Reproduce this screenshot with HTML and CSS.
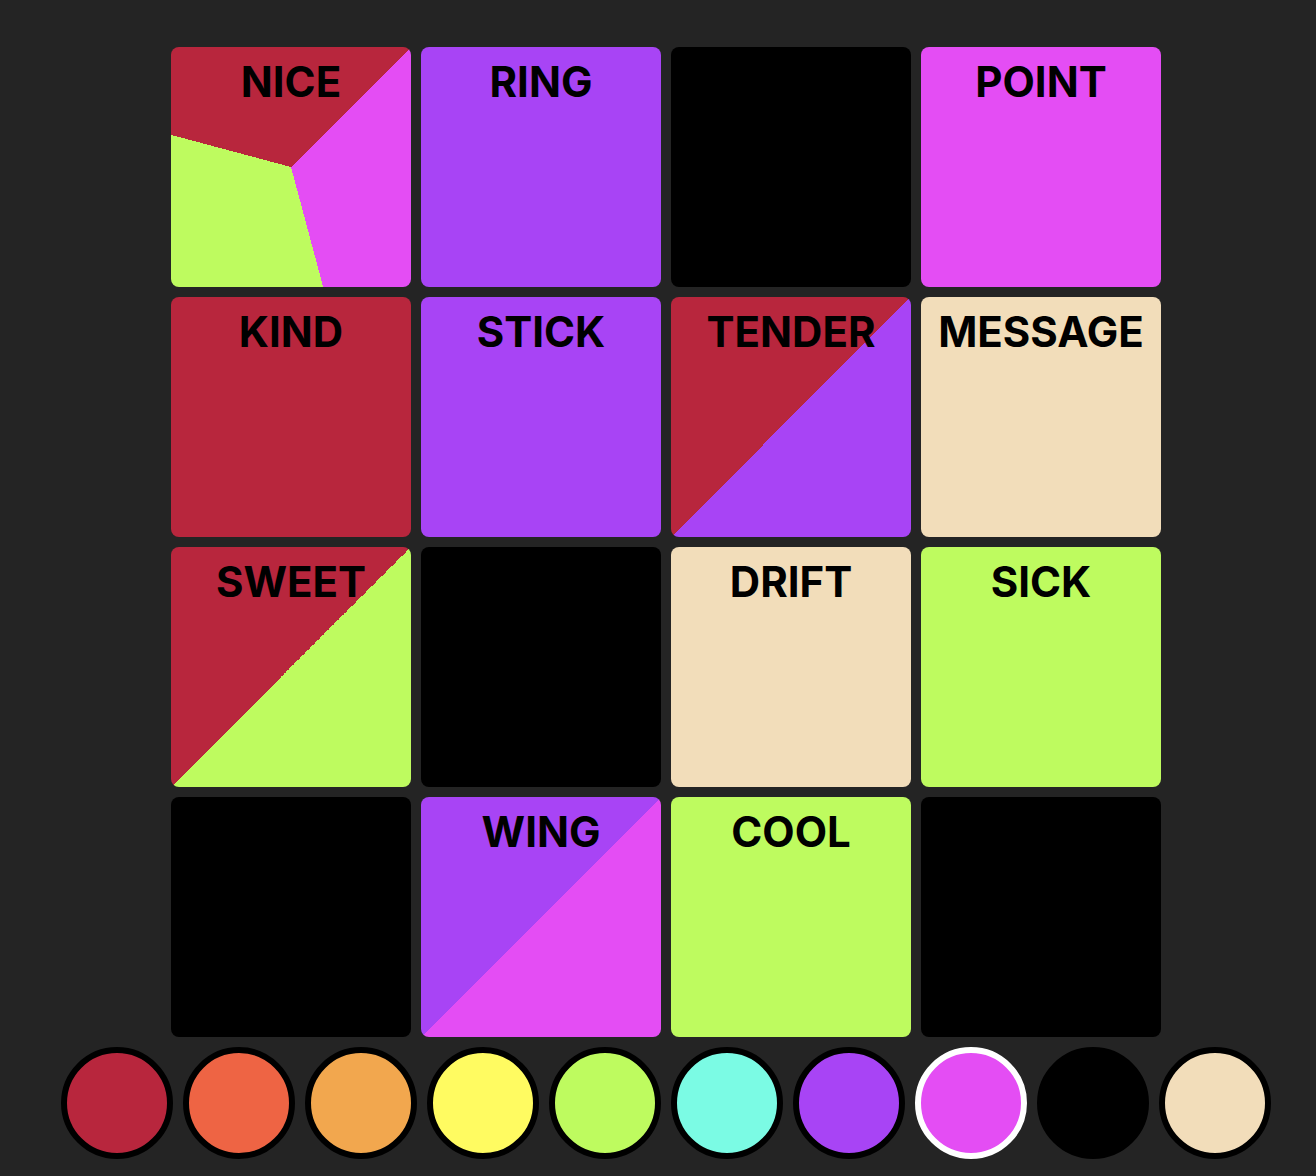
FILE: index.html
```html
<!DOCTYPE html>
<html>
<head>
<meta charset="utf-8">
<link rel="stylesheet" href="styles.css">
</head>
<body>
<main class="app">
  <div class="board">
    <div class="tile tri-nice"><span class="word">NICE</span></div>
    <div class="tile c-purple"><span class="word">RING</span></div>
    <div class="tile c-black"></div>
    <div class="tile c-pink"><span class="word">POINT</span></div>

    <div class="tile c-red"><span class="word">KIND</span></div>
    <div class="tile c-purple"><span class="word">STICK</span></div>
    <div class="tile duo-red-purple"><span class="word">TENDER</span></div>
    <div class="tile c-beige"><span class="word">MESSAGE</span></div>

    <div class="tile duo-red-lime"><span class="word">SWEET</span></div>
    <div class="tile c-black"></div>
    <div class="tile c-beige"><span class="word">DRIFT</span></div>
    <div class="tile c-lime"><span class="word">SICK</span></div>

    <div class="tile c-black"></div>
    <div class="tile duo-purple-pink"><span class="word">WING</span></div>
    <div class="tile c-lime"><span class="word">COOL</span></div>
    <div class="tile c-black"></div>
  </div>
  <div class="palette">
    <div class="swatch c-red"></div>
    <div class="swatch c-coral"></div>
    <div class="swatch c-orange"></div>
    <div class="swatch c-yellow"></div>
    <div class="swatch c-lime"></div>
    <div class="swatch c-cyan"></div>
    <div class="swatch c-purple"></div>
    <div class="swatch c-pink selected"></div>
    <div class="swatch c-black"></div>
    <div class="swatch c-beige"></div>
  </div>
</main>
</body>
</html>
```
FILE: styles.css
```css
html, body {
  margin: 0;
  padding: 0;
  background: #242424;
}
body {
  font-family: Inter, "Liberation Sans", Arial, sans-serif;
}
.app {
  display: flex;
  flex-direction: column;
  align-items: center;
  padding: 47px 0 0 16px;
  gap: 10px;
}
.board {
  display: grid;
  grid-template-columns: repeat(4, 240px);
  grid-auto-rows: 240px;
  gap: 10px;
}
.tile {
  border-radius: 8px;
  display: flex;
  justify-content: center;
  align-items: flex-start;
  padding-top: 11px;
  box-sizing: border-box;
}
.word {
  font-size: 42px;
  font-weight: bold;
  color: #000;
  line-height: 48px;
}
.c-red { background: #b8263d; }
.c-coral { background: #ee6444; }
.c-orange { background: #f2a74e; }
.c-yellow { background: #fffb61; }
.c-lime { background: #befb5f; }
.c-cyan { background: #7bfbe4; }
.c-purple { background: #a844f5; }
.c-pink { background: #e44df4; }
.c-black { background: #000; }
.c-beige { background: #f2ddba; }

.tri-nice {
  background: conic-gradient(from 45deg at 50% 50%, #e44df4 0deg 120deg, #befb5f 120deg 240deg, #b8263d 240deg 360deg);
}
.duo-red-purple {
  background: conic-gradient(from 45deg at 50% 50%, #a844f5 0deg 180deg, #b8263d 180deg 360deg);
}
.duo-red-lime {
  background: conic-gradient(from 45deg at 50% 50%, #befb5f 0deg 180deg, #b8263d 180deg 360deg);
}
.duo-purple-pink {
  background: conic-gradient(from 45deg at 50% 50%, #e44df4 0deg 180deg, #a844f5 180deg 360deg);
}

.palette {
  display: flex;
  gap: 10px;
}
.swatch {
  width: 112px;
  height: 112px;
  box-sizing: border-box;
  border-radius: 50%;
  border: 6px solid #000;
}
.swatch.selected {
  border-color: #fff;
}
```
